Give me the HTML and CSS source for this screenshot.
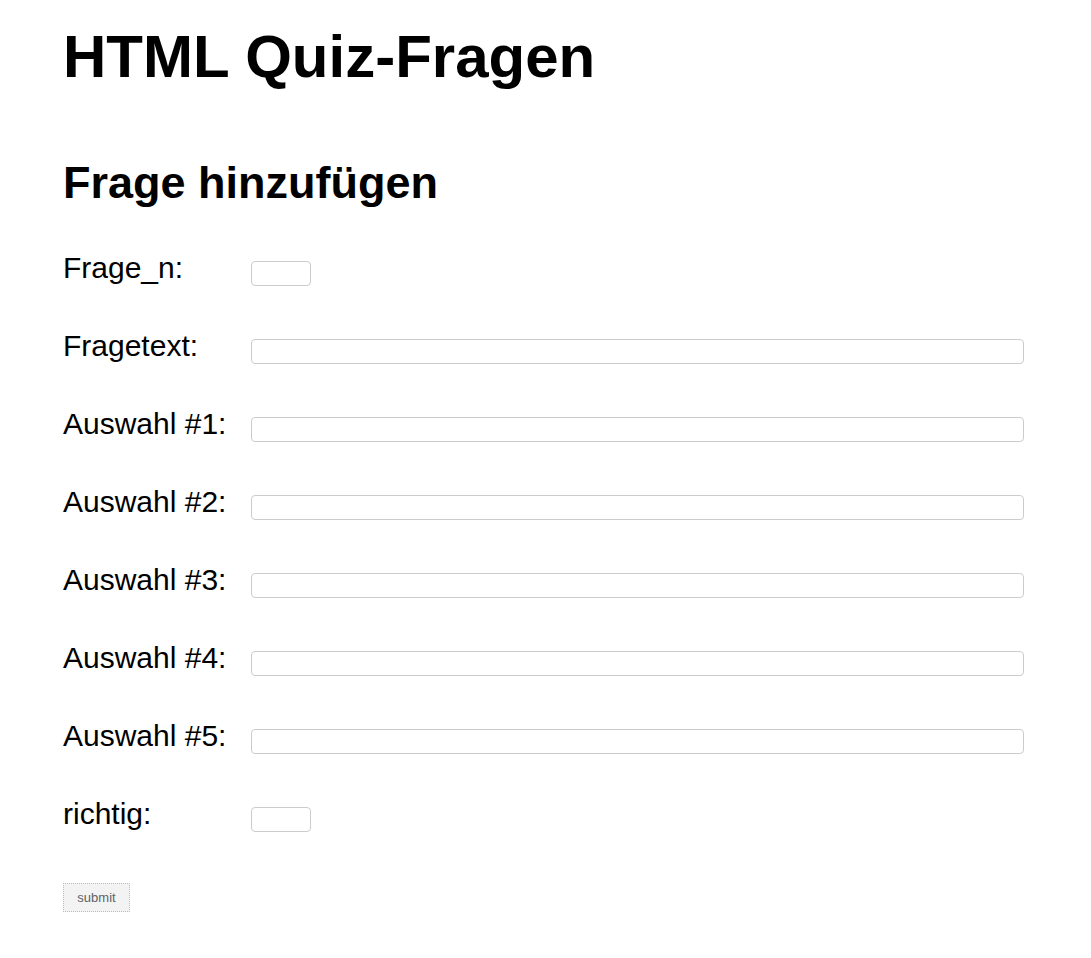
FILE: index.html
```html
<!DOCTYPE html>
<html lang="de">
<head>
<meta charset="utf-8">
<title>HTML Quiz-Fragen</title>
<link rel="stylesheet" href="styles.css">
</head>
<body>
<main class="page">
  <h1 class="title">HTML Quiz-Fragen</h1>
  <h2 class="subtitle">Frage hinzufügen</h2>
  <form class="quiz-form">
    <div class="row"><label class="label" for="n">Frage_n:</label><input class="field field-small" id="n" type="text"></div>
    <div class="row"><label class="label" for="t">Fragetext:</label><input class="field" id="t" type="text"></div>
    <div class="row"><label class="label" for="a1">Auswahl #1:</label><input class="field" id="a1" type="text"></div>
    <div class="row"><label class="label" for="a2">Auswahl #2:</label><input class="field" id="a2" type="text"></div>
    <div class="row"><label class="label" for="a3">Auswahl #3:</label><input class="field" id="a3" type="text"></div>
    <div class="row"><label class="label" for="a4">Auswahl #4:</label><input class="field" id="a4" type="text"></div>
    <div class="row"><label class="label" for="a5">Auswahl #5:</label><input class="field" id="a5" type="text"></div>
    <div class="row"><label class="label" for="r">richtig:</label><input class="field field-small" id="r" type="text"></div>
    <button class="submit" type="submit">submit</button>
  </form>
</main>
</body>
</html>
```
FILE: styles.css
```css
html, body {
  margin: 0;
  padding: 0;
  background: #ffffff;
}
body {
  font-family: "Liberation Sans", Arial, sans-serif;
  color: #000;
}
.page {
  padding: 23px 67px 0 63px;
}
.title {
  margin: 0;
  font-size: 60px;
  line-height: 68px;
  font-weight: bold;
}
.subtitle {
  margin: 67px 0 0 0;
  font-size: 45px;
  line-height: 50px;
  font-weight: bold;
}
.quiz-form {
  margin-top: 43px;
  display: flex;
  flex-direction: column;
}
.row {
  display: flex;
  align-items: flex-start;
  height: 78px;
}
.label {
  width: 188px;
  flex: none;
  font-size: 30px;
  line-height: 34px;
}
.field {
  flex: 1;
  box-sizing: border-box;
  height: 25px;
  margin: 10px 0 0 0;
  padding: 0 4px;
  border: 1px solid #cccccc;
  border-radius: 4px;
  background: #fff;
  font-family: "Liberation Sans", Arial, sans-serif;
  font-size: 14px;
  outline: none;
}
.field-small {
  flex: none;
  width: 60px;
}
.submit {
  align-self: flex-start;
  margin-top: 8px;
  box-sizing: border-box;
  width: 67px;
  height: 29px;
  padding: 0;
  border: 1px dotted #bdbdbd;
  background: #f3f3f3;
  color: #5f6368;
  font-family: "Liberation Sans", Arial, sans-serif;
  font-size: 13px;
}
```
